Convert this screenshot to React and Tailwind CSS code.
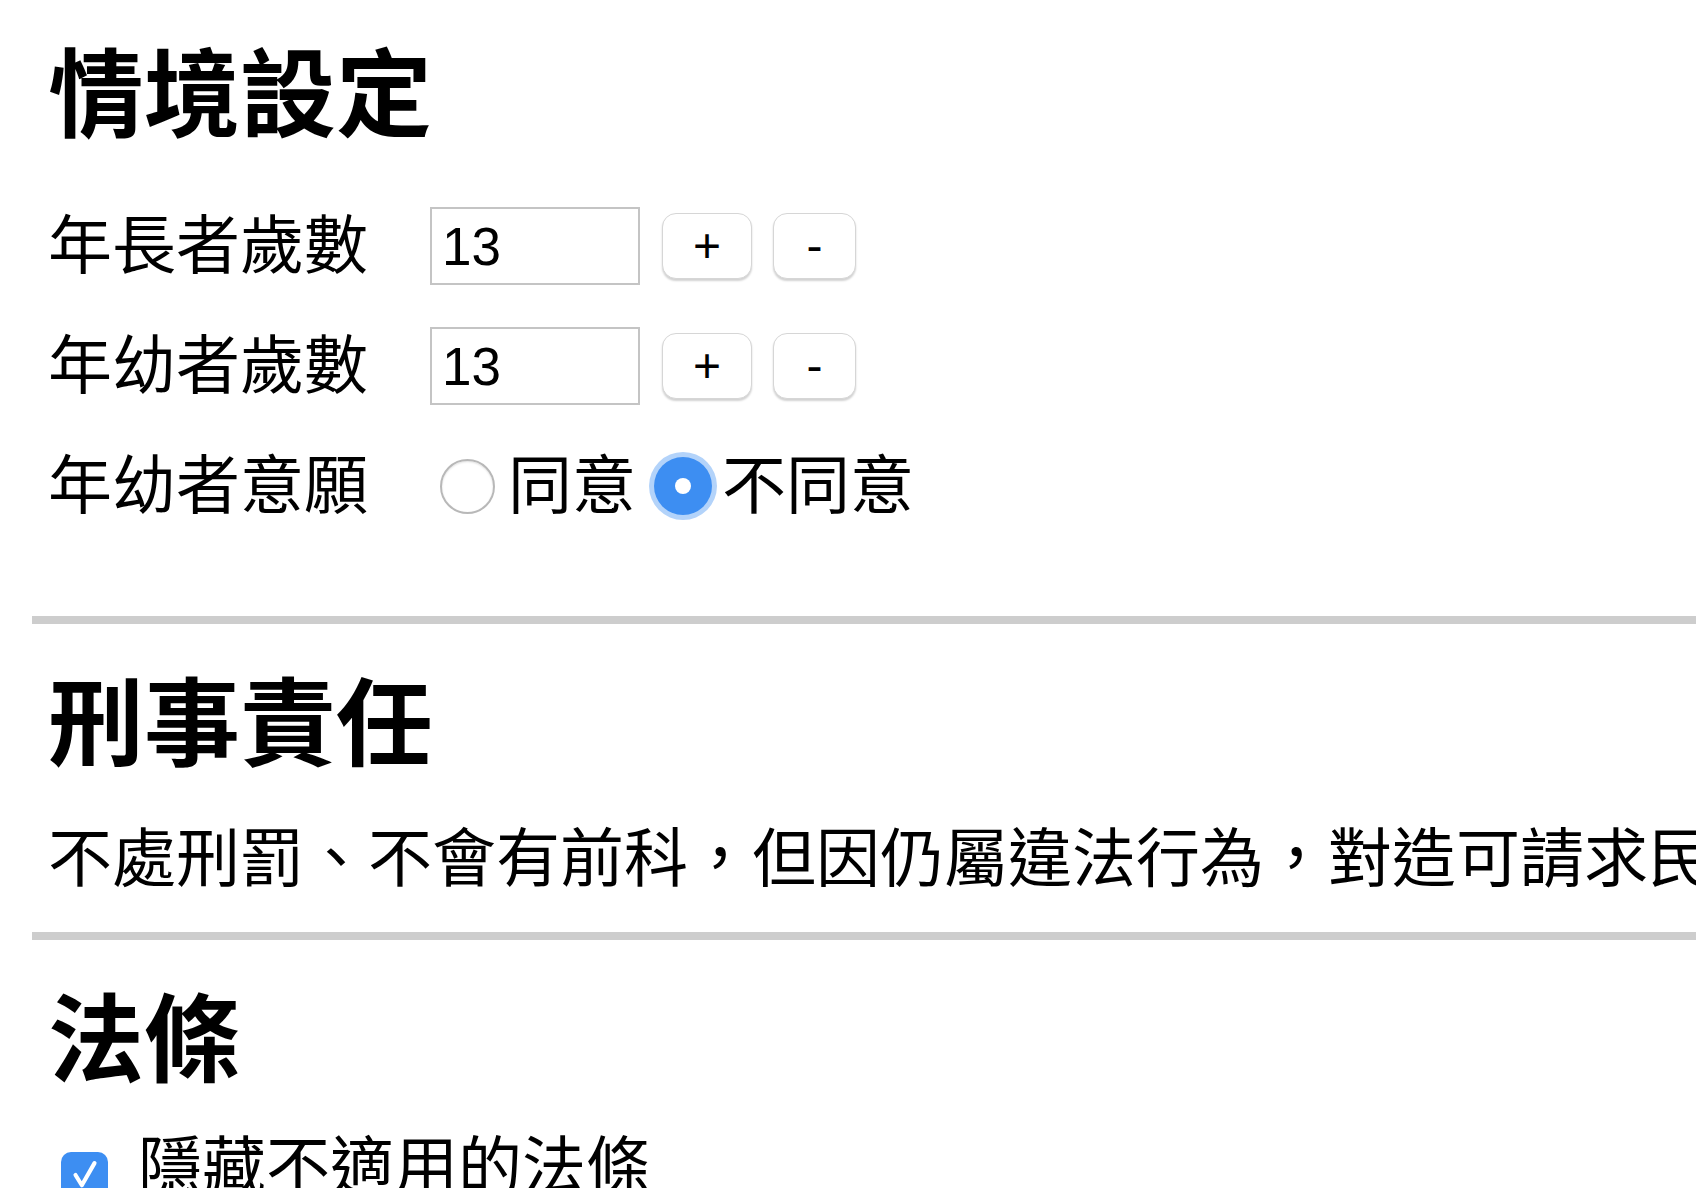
import { useState } from 'react';

const fontCls = "font-['Liberation_Sans','Noto_Sans_CJK_TC',sans-serif]";

function Stepper({ label, value, onChange }) {
  return (
    <div className="flex items-center h-[120px]">
      <span className="w-[382px] text-[64px] leading-none">{label}</span>
      <input
        readOnly
        value={value}
        className="w-[210px] h-[78px] border-2 border-[#c4c4c4] pl-[10px] text-[53px] leading-none outline-none"
      />
      <button
        onClick={() => onChange(value + 1)}
        className="ml-[22px] w-[90px] h-[66px] rounded-[14px] border border-[#d6d6d6] bg-white shadow-[0_2px_2px_rgba(0,0,0,0.18)] text-[48px] leading-none flex items-center justify-center"
      >
        +
      </button>
      <button
        onClick={() => onChange(value - 1)}
        className="ml-[21px] w-[83px] h-[66px] rounded-[14px] border border-[#d6d6d6] bg-white shadow-[0_2px_2px_rgba(0,0,0,0.18)] text-[48px] leading-none flex items-center justify-center"
      >
        -
      </button>
    </div>
  );
}

function Radio({ checked, label, onClick }) {
  return (
    <label className="flex items-center cursor-pointer" onClick={onClick}>
      {checked ? (
        <span className="w-[58px] h-[58px] rounded-full bg-[#3d8ef2] ring-[5px] ring-[#b3d3fa] flex items-center justify-center">
          <span className="w-[16px] h-[16px] rounded-full bg-white" />
        </span>
      ) : (
        <span className="w-[55px] h-[55px] rounded-full border-2 border-[#b8b8b8] bg-white shadow-[inset_0_1px_2px_rgba(0,0,0,0.12)]" />
      )}
      <span className={checked ? 'ml-[10px]' : 'ml-[13px]'}>{label}</span>
    </label>
  );
}

export default function App() {
  const [older,   setOlder]   = useState(13);
  const [younger, setYounger] = useState(13);
  const [consent, setConsent] = useState(false);
  const [hide,    setHide]    = useState(true);

  return (
    <div className={`${fontCls} text-black bg-white min-h-screen overflow-hidden pl-[32px]`}>
      {/* 情境設定 */}
      <section className="pl-[16px] pt-[48px]">
        <h2 className="text-[96px] leading-none font-bold">情境設定</h2>
        <div className="mt-[42px]">
          <Stepper label="年長者歲數" value={older} onChange={setOlder} />
          <Stepper label="年幼者歲數" value={younger} onChange={setYounger} />
          <div className="flex items-center h-[120px] text-[64px] leading-none">
            <span className="w-[392px]">年幼者意願</span>
            <Radio label="同意" checked={consent} onClick={() => setConsent(true)} />
            <span className="w-[18px]" />
            <Radio label="不同意" checked={!consent} onClick={() => setConsent(false)} />
          </div>
        </div>
      </section>

      <div className="mt-[70px] h-[8px] bg-[#cdcdcd]" />

      {/* 刑事責任 */}
      <section className="pl-[16px]">
        <h2 className="mt-[53px] text-[96px] leading-none font-bold">刑事責任</h2>
        <p className="mt-[54px] text-[64px] leading-none whitespace-nowrap">
          不處刑罰、不會有前科，但因仍屬違法行為，對造可請求民事損害賠償。
        </p>
      </section>

      <div className="mt-[41px] h-[8px] bg-[#cdcdcd]" />

      {/* 法條 */}
      <section className="pl-[16px]">
        <h2 className="mt-[53px] text-[96px] leading-none font-bold">法條</h2>
        <label className="mt-[46px] flex items-center text-[64px] leading-none cursor-pointer" onClick={() => setHide(!hide)}>
          <span className="ml-[13px] mt-[16px] w-[47px] h-[47px] rounded-[10px] bg-[#3d8ef2] flex items-center justify-center">
            {hide && (
              <svg viewBox="0 0 24 24" className="w-[38px] h-[38px]" fill="none" stroke="white" strokeWidth="2.6" strokeLinecap="round" strokeLinejoin="round">
                <polyline points="6 12 10 18.5 18 4.5" />
              </svg>
            )}
          </span>
          <span className="ml-[30px]">隱藏不適用的法條</span>
        </label>
      </section>
    </div>
  );
}
